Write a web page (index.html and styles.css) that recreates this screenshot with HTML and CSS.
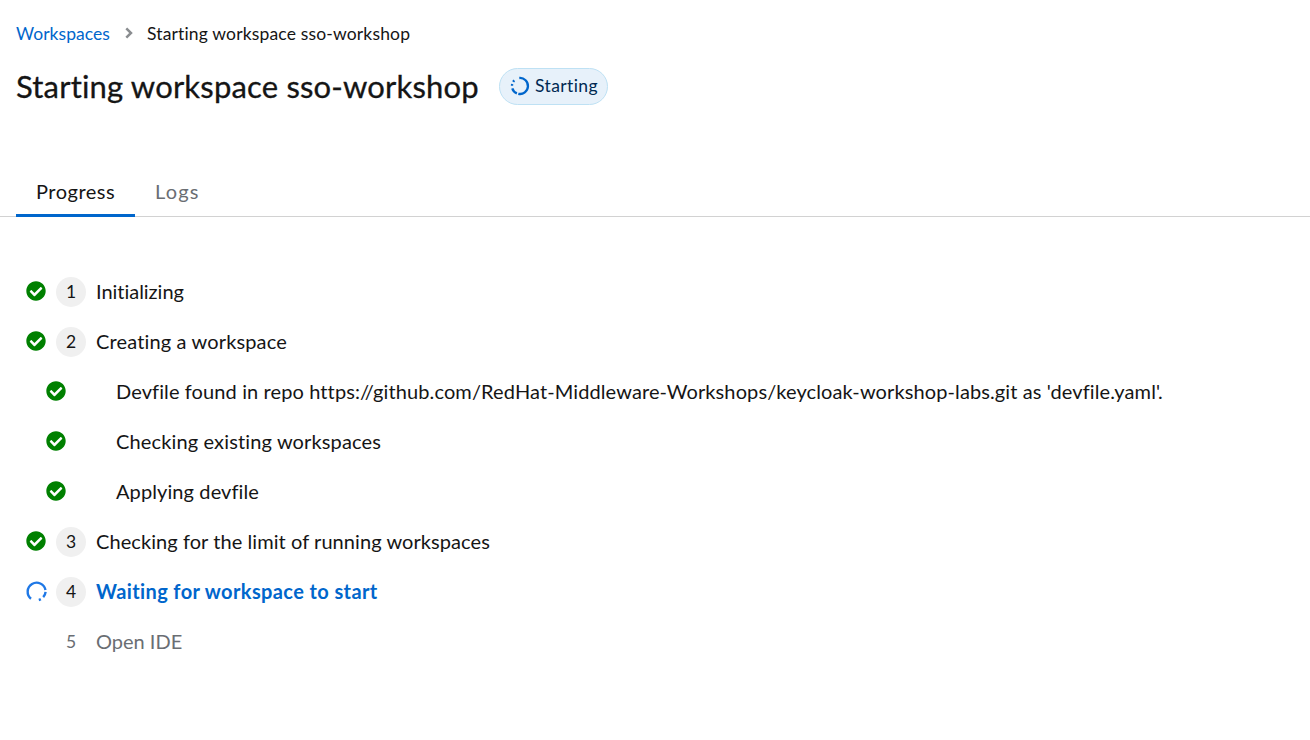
FILE: index.html
```html
<!DOCTYPE html>
<html lang="en">
<head>
<meta charset="utf-8">
<title>Starting workspace sso-workshop</title>
<link rel="stylesheet" href="styles.css">
</head>
<body>
<svg class="defs" width="0" height="0">
  <symbol id="check" viewBox="0 0 512 512"><path fill="currentColor" d="M504 256c0 137-111 248-248 248S8 393 8 256 119 8 256 8s248 111 248 248zM227.300 387.300l184-184c6.200-6.200 6.200-16.400 0-22.600l-22.600-22.600c-6.200-6.200-16.400-6.200-22.600 0L216 308.100l-70.100-70.100c-6.200-6.200-16.400-6.200-22.600 0l-22.600 22.600c-6.200 6.200-6.200 16.400 0 22.600l104 104c6.200 6.200 16.400 6.200 22.600 0z"/></symbol>
</svg>
<header class="header">
  <nav class="breadcrumb">
    <a class="crumb-link">Workspaces</a>
    <svg class="chevron" viewBox="0 0 8 12"><path d="M1.300 1.300 6 6l-4.700 4.700"/></svg>
    <span class="crumb-current">Starting workspace sso-workshop</span>
  </nav>
  <div class="heading">
    <h1 class="title">Starting workspace sso-workshop</h1>
    <span class="label">
      <svg class="label-icon" viewBox="0 0 20 20"><path d="M9.300 2A8 8 0 1 1 8.300 17.800M6.900 17.400A8 8 0 0 1 2.300 12.300M2 9.700A8 8 0 0 1 2.200 7.900M3.200 5.800A8 8 0 0 1 4.300 4.400"/></svg>
      <span class="label-text">Starting</span>
    </span>
  </div>
</header>
<div class="tabs">
  <div class="tab active"><span class="tab-progress">Progress</span></div>
  <div class="tab"><span class="tab-logs">Logs</span></div>
</div>
<main class="steps">
  <div class="step"><svg class="icon"><use href="#check"/></svg><span class="num">1</span><span class="text t1">Initializing</span></div>
  <div class="step"><svg class="icon"><use href="#check"/></svg><span class="num">2</span><span class="text t2">Creating a workspace</span></div>
  <div class="step sub"><svg class="icon"><use href="#check"/></svg><span class="text t3">Devfile found in repo https://github.com/RedHat-Middleware-Workshops/keycloak-workshop-labs.git as 'devfile.yaml'.</span></div>
  <div class="step sub"><svg class="icon"><use href="#check"/></svg><span class="text t4">Checking existing workspaces</span></div>
  <div class="step sub"><svg class="icon"><use href="#check"/></svg><span class="text t5">Applying devfile</span></div>
  <div class="step"><svg class="icon"><use href="#check"/></svg><span class="num">3</span><span class="text t6">Checking for the limit of running workspaces</span></div>
  <div class="step current"><svg class="icon spinner" viewBox="0 0 20 20"><path d="M5 17.700A9 9 0 1 1 19.500 9M19.600 10.800A9 9 0 0 1 17.200 16.100M14.800 18.100A9 9 0 0 1 12.800 19"/></svg><span class="num">4</span><span class="text t7">Waiting for workspace to start</span></div>
  <div class="step pending"><span class="icon"></span><span class="num">5</span><span class="text t8">Open IDE</span></div>
</main>
</body>
</html>
```
FILE: styles.css
```css
* { box-sizing: border-box; }
body { margin: 0; background: #fff; color: #151515; font-family: Lato, "Open Sans", sans-serif; font-size: 20px; font-variant-ligatures: none; }
.defs { display: block; }
.header { padding: 19px 16px 0; height: 168px; }
.breadcrumb { display: flex; align-items: center; height: 28px; font-size: 17.5px; white-space: nowrap; }
.crumb-link { color: #06c; width: 94px; letter-spacing: 0.05px; }
.crumb-current { letter-spacing: 0.16px; }
.chevron { width: 8px; height: 12px; margin: 0 14px 0 15px; fill: none; stroke: #8a8d90; stroke-width: 2.500; }
.heading { display: flex; align-items: center; margin-top: 21px; height: 37px; }
.title { margin: 0; width: 483px; font-size: 31px; font-weight: 400; line-height: 37px; letter-spacing: 0.18px; white-space: nowrap; -webkit-text-stroke: 0.3px #151515; }
.label { display: flex; align-items: center; width: 109px; height: 37px; padding: 0 9px 0 10px; border: 1px solid #bee1f4; border-radius: 19px; background: #e7f1fa; color: #002952; font-size: 17.5px; }
.label-icon { width: 20px; height: 20px; margin-right: 5px; margin-top: -2px; fill: none; stroke: #06c; stroke-width: 2.300; }
.label-text { margin-top: -2px; letter-spacing: 0.4px; }
.tabs { display: flex; height: 49px; padding-left: 16px; border-bottom: 1px solid #d2d2d2; }
.tab { height: 49px; padding: 0 20px; line-height: 46px; color: #6a6e73; white-space: nowrap; }
.tab.active { width: 119px; color: #151515; border-bottom: 3px solid #06c; }
.tab-progress { letter-spacing: 0.5px; }
.tab-logs { letter-spacing: 1.2px; }
.steps { padding: 50px 26px 0; }
.step { display: flex; align-items: center; height: 50px; white-space: nowrap; }
.step.sub { padding-left: 20px; }
.icon { width: 20px; height: 20px; margin-right: 10px; margin-top: -2px; color: green; flex: none; }
.sub .icon { margin-right: 50px; }
.spinner { overflow: visible; fill: none; stroke: #1f78e6; stroke-width: 2.400; }
.num { width: 30px; height: 30px; margin-right: 10px; border-radius: 50%; background: #f0f0f0; text-align: center; font-size: 17.5px; line-height: 30px; flex: none; }
.text { margin-top: -2px; }
.t1 { letter-spacing: -0.03px; }
.t2 { letter-spacing: 0.15px; }
.t3 { letter-spacing: 0.11px; }
.t4 { letter-spacing: 0.14px; }
.t5 { letter-spacing: 0.1px; }
.t6 { letter-spacing: 0.07px; }
.t7 { letter-spacing: 0.39px; }
.current .text { color: #06c; font-weight: 700; }
.pending, .pending .num { color: #6a6e73; }
.pending .num { background: none; }
```
